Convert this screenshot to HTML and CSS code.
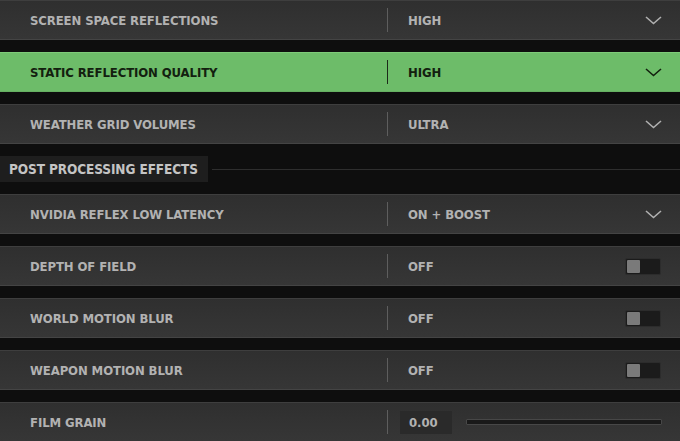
FILE: index.html
```html
<!DOCTYPE html>
<html>
<head>
    <title>Graphics Settings</title>
    <link rel="stylesheet" href="styles.css">
</head>
<body>
    <div class="settings">
        <div class="row">
            <div class="label">Screen Space Reflections</div>
            <div class="divider"></div>
            <div class="value">High</div>
            <svg class="chevron" width="17" height="9" viewBox="0 0 17 9"><polyline points="1,1 8.5,7.5 16,1"/></svg>
        </div>
        <div class="row active">
            <div class="label">Static Reflection Quality</div>
            <div class="divider"></div>
            <div class="value">High</div>
            <svg class="chevron" width="17" height="9" viewBox="0 0 17 9"><polyline points="1,1 8.5,7.5 16,1"/></svg>
        </div>
        <div class="row">
            <div class="label">Weather Grid Volumes</div>
            <div class="divider"></div>
            <div class="value">Ultra</div>
            <svg class="chevron" width="17" height="9" viewBox="0 0 17 9"><polyline points="1,1 8.5,7.5 16,1"/></svg>
        </div>

        <div class="section">
            <div class="section-title">Post Processing Effects</div>
            <div class="section-line"></div>
        </div>

        <div class="row">
            <div class="label">NVIDIA Reflex Low Latency</div>
            <div class="divider"></div>
            <div class="value">On + Boost</div>
            <svg class="chevron" width="17" height="9" viewBox="0 0 17 9"><polyline points="1,1 8.5,7.5 16,1"/></svg>
        </div>
        <div class="row">
            <div class="label">Depth of Field</div>
            <div class="divider"></div>
            <div class="value">Off</div>
            <div class="toggle"><span class="knob"></span></div>
        </div>
        <div class="row">
            <div class="label">World Motion Blur</div>
            <div class="divider"></div>
            <div class="value">Off</div>
            <div class="toggle"><span class="knob"></span></div>
        </div>
        <div class="row">
            <div class="label">Weapon Motion Blur</div>
            <div class="divider"></div>
            <div class="value">Off</div>
            <div class="toggle"><span class="knob"></span></div>
        </div>
        <div class="row">
            <div class="label">Film Grain</div>
            <div class="divider"></div>
            <div class="slider-wrap">
                <div class="number-box">0.00</div>
                <div class="track"></div>
            </div>
        </div>
    </div>
</body>
</html>
```

FILE: styles.css
```css
body {
    margin: 0;
    background-color: #0e0e0e;
    font-family: "DejaVu Sans Condensed", "DejaVu Sans", sans-serif;
    font-weight: bold;
    font-size: 13px;
    letter-spacing: -0.1px;
    text-transform: uppercase;
    color: #b2b2b2;
    white-space: nowrap;
}

.settings {
    display: flex;
    flex-direction: column;
    gap: 12px;
}

.row {
    display: flex;
    align-items: center;
    height: 40px;
    box-sizing: border-box;
    border-top: 1px solid #3e3e3e;
    border-bottom: 1px solid #444;
    background: linear-gradient(to bottom, #2f2f2f, #363636);
}

.label {
    width: 357px;
    padding-left: 30px;
    box-sizing: content-box;
}

.divider {
    width: 1px;
    height: 24px;
    background-color: #5e5e5e;
}

.value {
    flex: 1;
    padding-left: 20px;
}

.chevron {
    margin-right: 18px;
    fill: none;
    stroke: #b0b0b0;
    stroke-width: 1.6;
}

.row.active {
    background: #6dbc69;
    border-top-color: #7ecb79;
    border-bottom-color: #66b062;
    color: #13200f;
}

.row.active .divider {
    background-color: #1c2a19;
}

.row.active .chevron {
    stroke: #13200f;
}

.section {
    display: flex;
    align-items: center;
    height: 26px;
}

.section-title {
    width: 208px;
    height: 100%;
    box-sizing: border-box;
    padding-left: 9px;
    display: flex;
    align-items: center;
    background-color: #1e1e1e;
    color: #c4c4c4;
    font-size: 13.5px;
}

.section-line {
    flex: 1;
    height: 1px;
    margin-left: 4px;
    background-color: #2e2e2e;
}

.toggle {
    width: 36px;
    height: 17px;
    box-sizing: border-box;
    margin-right: 19px;
    padding: 1px;
    background-color: #1b1b1b;
    border: 1px solid #2c2c2c;
    border-radius: 2px;
}

.knob {
    display: block;
    width: 13px;
    height: 13px;
    background-color: #7a7a7a;
    border-radius: 1px;
}

.slider-wrap {
    flex: 1;
    display: flex;
    align-items: center;
    padding-left: 12px;
    padding-right: 18px;
    gap: 14px;
}

.number-box {
    width: 52px;
    height: 23px;
    box-sizing: border-box;
    padding-left: 9px;
    display: flex;
    align-items: center;
    background-color: #2a2a2a;
}

.track {
    flex: 1;
    height: 6px;
    box-sizing: border-box;
    background-color: #191919;
    border: 1px solid #474747;
    border-radius: 1px;
}
```
